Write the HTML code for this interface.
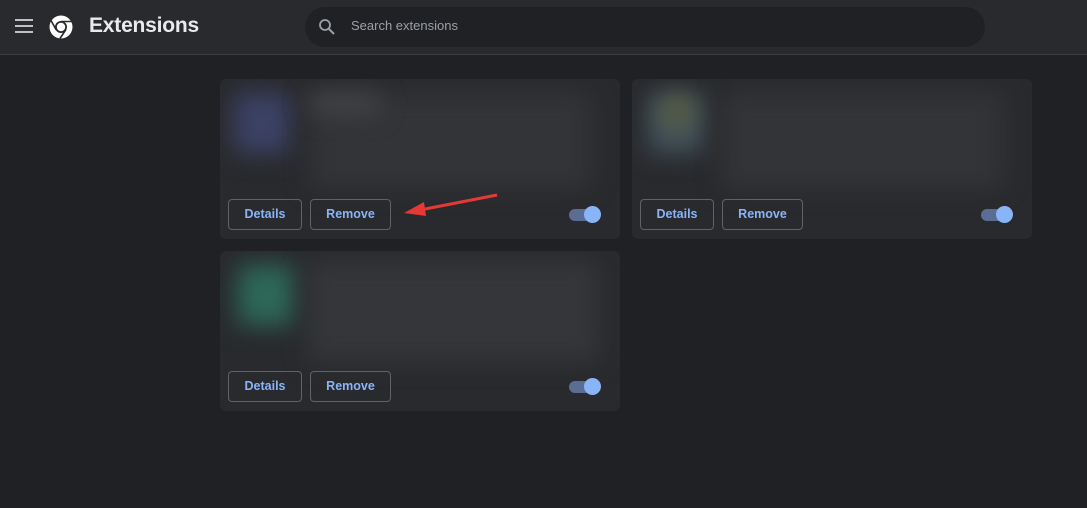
<!DOCTYPE html>
<html><head><style>
body{margin:0;width:1087px;height:508px;background:#202124;font-family:"Liberation Sans",sans-serif;overflow:hidden;position:relative}
.hdr{position:absolute;left:0;top:0;width:1087px;height:54px;background:#292a2d;border-bottom:1px solid #3c3d40}
.title{position:absolute;left:89px;top:14px;color:#e8eaed;font-size:21px;font-weight:bold;letter-spacing:-0.2px}
.search{position:absolute;left:305px;top:7px;width:680px;height:40px;border-radius:20px;background:#202124}
.search span{position:absolute;left:46px;top:11px;color:#9aa0a6;font-size:13px}
.card{position:absolute;width:400px;height:160px;background:#292a2d;border-radius:6px;overflow:hidden}
.btn{position:absolute;top:120px;height:29px;border:1px solid #5f6368;border-radius:4px;color:#8ab4f8;font-size:12.5px;font-weight:bold;text-align:center;line-height:29px}
.blur{position:absolute;filter:blur(12px)}
.track{position:absolute;left:349px;top:130px;width:28px;height:12px;border-radius:6px;background:#5a6e95}
.thumb{position:absolute;left:364px;top:127px;width:17px;height:17px;border-radius:50%;background:#8ab4f8}
</style></head><body>
<div class="hdr">
<svg style="position:absolute;left:15px;top:19px" width="18" height="14"><rect y="0" width="18" height="2" fill="#bdc1c6"/><rect y="6" width="18" height="2" fill="#bdc1c6"/><rect y="12" width="18" height="2" fill="#bdc1c6"/></svg>
<svg style="position:absolute;left:49px;top:15px" width="24" height="24" viewBox="0 0 24 24"><circle cx="12" cy="12" r="11.5" fill="#fff"/><circle cx="12" cy="12" r="6" fill="#292a2d"/><circle cx="12" cy="12" r="4.2" fill="#fff"/><path d="M12 6.5 L23 6.5 M7.2 14.8 L2 5.5 M16.8 14.8 L11 23.5" stroke="#292a2d" stroke-width="1.6"/></svg>
<div class="title">Extensions</div>
<div class="search"><svg style="position:absolute;left:13px;top:11px" width="18" height="18" viewBox="0 0 18 18"><circle cx="7" cy="7" r="5" fill="none" stroke="#9aa0a6" stroke-width="1.8"/><path d="M10.5 10.5 L16 16" stroke="#9aa0a6" stroke-width="2"/></svg><span>Search extensions</span></div>
</div>

<div class="card" style="left:220px;top:79px">
<div class="blur" style="left:14px;top:14px;width:56px;height:60px;background:#3c4266"></div>
<div class="blur" style="left:90px;top:14px;width:280px;height:95px;background:#333437"></div>
<div class="blur" style="left:90px;top:14px;width:70px;height:20px;background:#444548"></div>
<div class="btn" style="left:8px;width:72px">Details</div>
<div class="btn" style="left:90px;width:79px">Remove</div>
<div class="track"></div><div class="thumb"></div>
</div>

<div class="card" style="left:632px;top:79px">
<div class="blur" style="left:16px;top:14px;width:56px;height:60px;background:#42525c"></div>
<div class="blur" style="left:30px;top:18px;width:30px;height:30px;background:#585e40"></div>
<div class="blur" style="left:90px;top:14px;width:280px;height:95px;background:#333437"></div>
<div class="btn" style="left:8px;width:72px">Details</div>
<div class="btn" style="left:90px;width:79px">Remove</div>
<div class="track"></div><div class="thumb"></div>
</div>

<div class="card" style="left:220px;top:251px">
<div class="blur" style="left:18px;top:14px;width:56px;height:60px;background:#2d6858"></div>
<div class="blur" style="left:88px;top:10px;width:290px;height:100px;background:#353639"></div>
<div class="btn" style="left:8px;width:72px">Details</div>
<div class="btn" style="left:90px;width:79px">Remove</div>
<div class="track"></div><div class="thumb"></div>
</div>

<svg style="position:absolute;left:0;top:0" width="1087" height="508"><path d="M497 195 L420 210" stroke="#e53935" stroke-width="3"/><path d="M404 213 L424 202 L426 216 Z" fill="#e53935"/></svg>
</body></html>
